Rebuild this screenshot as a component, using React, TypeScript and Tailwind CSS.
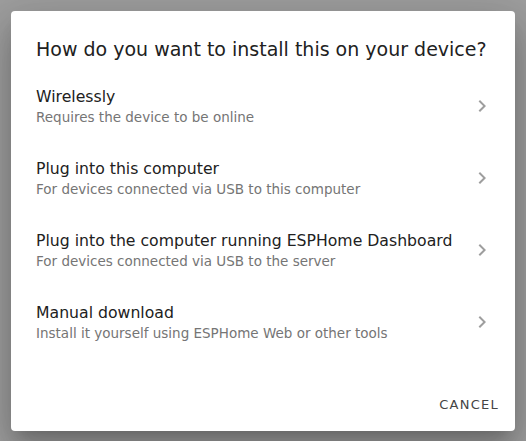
import React from "react";

const items = [
  { title: "Wirelessly", sub: "Requires the device to be online" },
  { title: "Plug into this computer", sub: "For devices connected via USB to this computer" },
  { title: "Plug into the computer running ESPHome Dashboard", sub: "For devices connected via USB to the server" },
  { title: "Manual download", sub: "Install it yourself using ESPHome Web or other tools" },
];

function Chevron() {
  return (
    <svg width="24" height="24" viewBox="0 0 24 24" className="shrink-0">
      <path d="M8.59,16.58L13.17,12L8.59,7.41L10,6L16,12L10,18L8.59,16.58Z" fill="#9e9e9e" />
    </svg>
  );
}

export default function App() {
  return (
    <div
      className="w-[526px] h-[441px] bg-[#9e9e9e] p-[11px] overflow-hidden"
      style={{ fontFamily: '"DejaVu Sans", sans-serif' }}
    >
      <div className="w-[504px] h-[420px] bg-white rounded-[4px] shadow-[0_11px_15px_-7px_rgba(0,0,0,0.2),0_24px_38px_3px_rgba(0,0,0,0.14),0_9px_46px_8px_rgba(0,0,0,0.12)] flex flex-col">
        <div className="pl-[25px] pt-[22px] h-[59px] text-[19px] leading-[32px] text-[#212121] whitespace-nowrap">
          How do you want to install this on your device?
        </div>
        <div className="flex flex-col">
          {items.map((it) => (
            <div key={it.title} className="h-[72px] flex items-center pl-[25px] pr-[21px]">
              <div className="flex-1 flex flex-col pt-[1px]">
                <div className="text-[15.7px] leading-[20px] text-[#212121]">{it.title}</div>
                <div className="text-[13.5px] leading-[20px] text-[#757575]">{it.sub}</div>
              </div>
              <Chevron />
            </div>
          ))}
        </div>
        <div className="flex-1 flex items-end justify-end px-[8px] pb-[8px]">
          <div className="h-[36px] px-[8px] flex items-center text-[13px] tracking-[1.25px] text-[#444] font-medium">
            CANCEL
          </div>
        </div>
      </div>
    </div>
  );
}
